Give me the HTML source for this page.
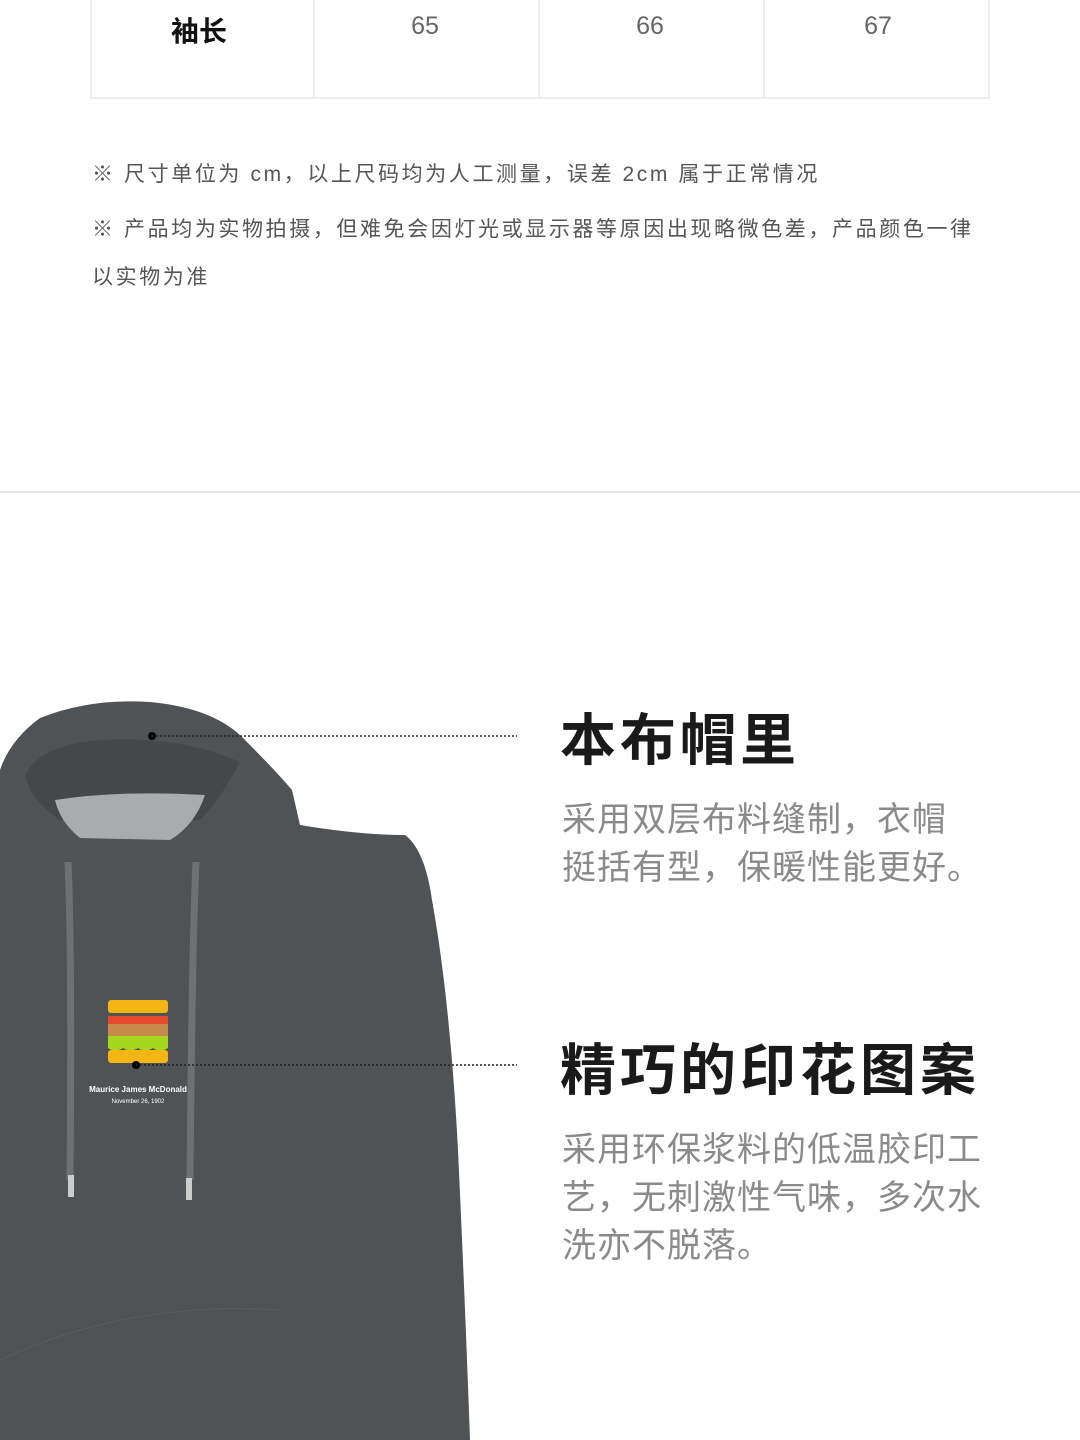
<!DOCTYPE html>
<html><head><meta charset="utf-8"><style>
body{margin:0;width:1080px;height:1440px;position:relative;background:#fff;overflow:hidden;font-family:"Liberation Sans","Noto Sans CJK SC",sans-serif}
.a{position:absolute;white-space:nowrap}
.n{color:#666;font-size:25px;top:12px;width:60px;text-align:center}
.note{color:#555;font-size:21px;left:92px;letter-spacing:2.6px}
.h{font-weight:bold;color:#1a1a1a;font-size:56px;left:560px;letter-spacing:4px}
.p{color:#8a8a8a;font-size:34px;left:562px;line-height:48px;letter-spacing:1px}
</style></head><body>
<div class="a" style="left:90px;top:-2px;width:900px;height:101px;border:2px solid #eee;border-top:none;box-sizing:border-box"></div>
<div class="a" style="left:313px;top:0;width:2px;height:98px;background:#eee"></div>
<div class="a" style="left:538px;top:0;width:2px;height:98px;background:#eee"></div>
<div class="a" style="left:763px;top:0;width:2px;height:98px;background:#eee"></div>
<div class="a" style="left:171px;top:10px;font-size:28px;font-weight:bold;color:#111">袖长</div>
<div class="a n" style="left:395px">65</div>
<div class="a n" style="left:620px">66</div>
<div class="a n" style="left:848px">67</div>
<div class="a note" style="top:158px">※ 尺寸单位为 cm，以上尺码均为人工测量，误差 2cm 属于正常情况</div>
<div class="a note" style="top:213px">※ 产品均为实物拍摄，但难免会因灯光或显示器等原因出现略微色差，产品颜色一律</div>
<div class="a note" style="top:261px">以实物为准</div>
<div class="a" style="left:0;top:491px;width:1080px;height:2px;background:#e8e8e8"></div>

<svg class="a" style="left:0;top:0" width="1080" height="1440">
<path d="M0 770 Q10 740 40 718 Q90 698 150 702 Q215 708 245 740 Q275 770 292 790 L300 825 Q360 835 405 835 Q425 850 432 900 Q450 1000 458 1150 Q465 1300 470 1440 L0 1440 Z" fill="#505356"/>
<path d="M25 775 Q40 745 100 740 Q180 735 240 762 Q220 800 200 820 L60 820 Q30 800 25 775 Z" fill="#45484b"/>
<path d="M55 800 Q120 790 205 795 Q195 825 170 840 L80 838 Q60 822 55 800 Z" fill="#a9abad"/>
<path d="M0 1360 Q130 1300 280 1310" stroke="#5b5e61" fill="none" stroke-width="1"/>
<path d="M68 862 Q72 950 70 1180" stroke="#6e7174" stroke-width="7" fill="none"/>
<path d="M196 862 Q192 950 190 1180" stroke="#6e7174" stroke-width="7" fill="none"/>
<rect x="68" y="1175" width="6" height="22" fill="#ccc"/>
<rect x="186" y="1178" width="6" height="22" fill="#ccc"/>
<rect x="108" y="1000" width="60" height="13" rx="3" fill="#f5b512"/>
<rect x="108" y="1016" width="60" height="8" fill="#e64a2e"/>
<rect x="108" y="1024" width="60" height="12" fill="#c78a4a"/>
<path d="M108 1036 H168 V1048 Q160 1053 153 1048 Q145 1053 138 1048 Q130 1053 123 1048 Q115 1053 108 1048 Z" fill="#a4d81f"/>
<rect x="108" y="1050" width="60" height="13" rx="3" fill="#f5b512"/>
<text x="138" y="1092" fill="#fff" font-size="8" font-weight="bold" text-anchor="middle" font-family="Liberation Sans">Maurice James McDonald</text>
<text x="138" y="1103" fill="#fff" font-size="6" text-anchor="middle" font-family="Liberation Sans">November 26, 1902</text>
<circle cx="152" cy="736" r="4" fill="#000"/>
<line x1="152" y1="736" x2="517" y2="736" stroke="#222" stroke-width="1.5" stroke-dasharray="2 2"/>
<circle cx="136" cy="1065" r="4" fill="#000"/>
<line x1="136" y1="1065" x2="517" y2="1065" stroke="#222" stroke-width="1.5" stroke-dasharray="2 2"/>
</svg>

<div class="a h" style="top:696px">本布帽里</div>
<div class="a p" style="top:796px">采用双层布料缝制，衣帽<br>挺括有型，保暖性能更好。</div>
<div class="a h" style="top:1026px">精巧的印花图案</div>
<div class="a p" style="top:1126px">采用环保浆料的低温胶印工<br>艺，无刺激性气味，多次水<br>洗亦不脱落。</div>
</body></html>
